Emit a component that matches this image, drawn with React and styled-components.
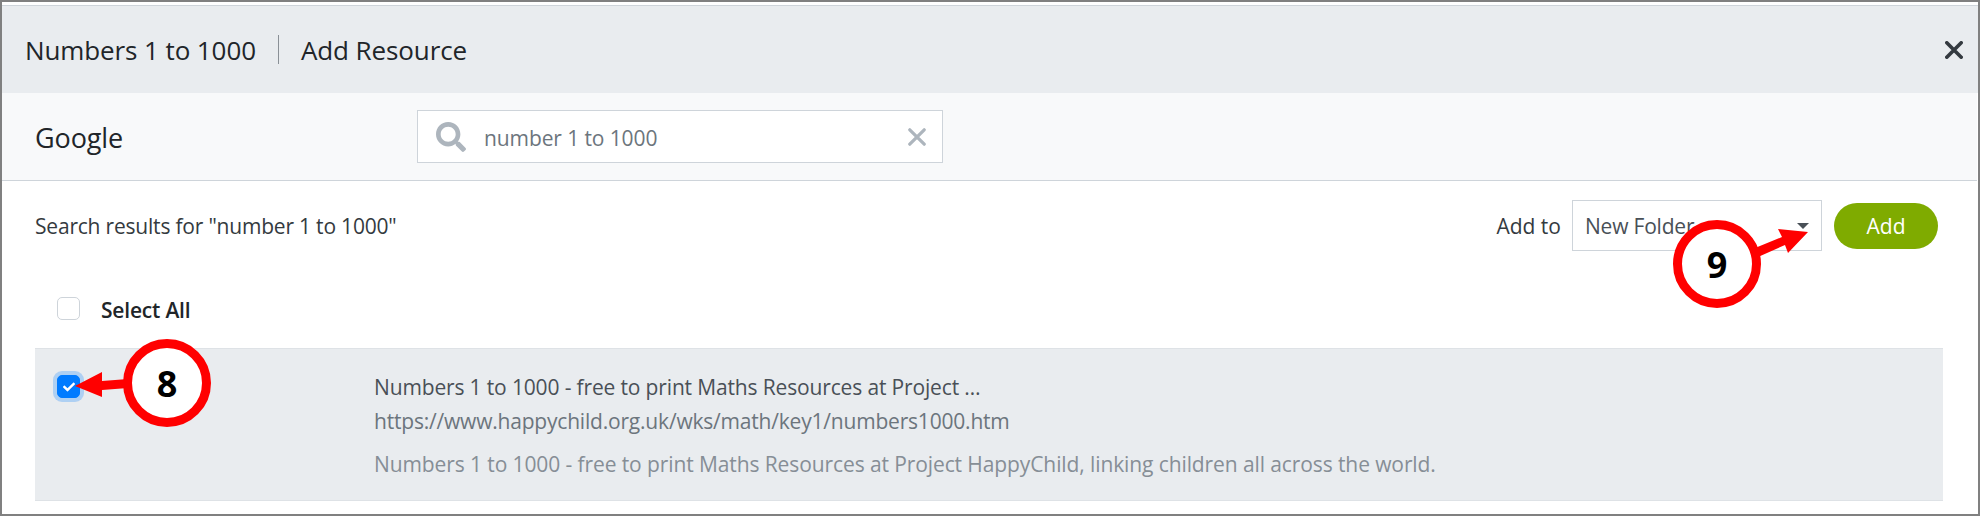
import React from 'react'
import styled, { createGlobalStyle } from 'styled-components'
import { FaSearch, FaCheck } from 'react-icons/fa'

const GlobalStyle = createGlobalStyle`
  html, body { margin: 0; padding: 0; background: #fff; }
  * { box-sizing: border-box; }
  body { font-family: "Open Sans", "Noto Sans", sans-serif; color: #212529; }
`

const Frame = styled.div`
  position: relative;
  width: 1980px;
  height: 516px;
  overflow: hidden;
  background: #fff;
  border: 2px solid #808080;
  padding-top: 3px;
`

const Header = styled.header`
  height: 88px;
  display: flex;
  align-items: center;
  background: #e9ecef;
  border-top: 1px solid #ced4da;
  padding: 0 15px 0 23px;
`

const Title = styled.h1`
  margin: 0;
  font-size: 26px;
  font-weight: 400;
  color: #212529;
  letter-spacing: -0.1px;
`

const Divider = styled.span`
  width: 1px;
  height: 29px;
  margin: 0 22px;
  background: #8a9096;
`

const CloseButton = styled.button`
  margin-left: auto;
  border: 0;
  padding: 0;
  background: none;
  display: flex;
  color: #343a40;
`

const SubHeader = styled.div`
  height: 88px;
  margin-right: 1px;
  display: grid;
  grid-template-columns: 382px 526px;
  align-items: center;
  padding-left: 33px;
  background: #f8f9fa;
  border-bottom: 1px solid #ced4da;
`

const SourceName = styled.span`
  margin-top: 2px;
  font-size: 27px;
  color: #212529;
  letter-spacing: -0.1px;
`

const SearchBox = styled.div`
  height: 53px;
  display: flex;
  align-items: center;
  background: #fff;
  border: 1px solid #ced4da;
  padding: 0 16px 0 18px;
  color: #adb5bd;
`

const SearchText = styled.span`
  margin: 3px 0 0 18px;
  font-size: 21px;
  color: #6c757d;
  letter-spacing: -0.1px;
`

const ClearIcon = styled.span`
  margin-left: auto;
  display: flex;
  color: #adb5bd;
`

const Content = styled.main`
  padding: 19px 33px 0;
`

const Toolbar = styled.div`
  display: flex;
  align-items: center;
  height: 51px;
  font-size: 21px;
  letter-spacing: -0.2px;
`

const ResultsLabel = styled.span`
  color: #343a40;
`

const AddToLabel = styled.span`
  margin-left: auto;
  margin-right: 11px;
  color: #343a40;
  letter-spacing: 0;
`

const FolderSelect = styled.div`
  width: 250px;
  height: 51px;
  display: flex;
  align-items: center;
  justify-content: space-between;
  padding: 0 12px;
  color: #495057;
  border: 1px solid #ced4da;
  background: #fff;
`

const Caret = styled.span`
  width: 0;
  height: 0;
  border-left: 6px solid transparent;
  border-right: 6px solid transparent;
  border-top: 6px solid #495057;
`

const AddButton = styled.button`
  width: 104px;
  height: 46px;
  margin-left: 12px;
  margin-right: 7px;
  border: 0;
  border-radius: 23px;
  background: #7fab00;
  color: #fff;
  font: inherit;
`

const SelectAllRow = styled.div`
  height: 97px;
  display: flex;
  align-items: flex-start;
  gap: 21px;
  padding: 46px 0 0 22px;
`

const Box = styled.span`
  flex: none;
  width: 23px;
  height: 23px;
  display: flex;
  align-items: center;
  justify-content: center;
  border-radius: 5px;
  font-size: 12px;
  color: #fff;
  background: ${(p) => (p.$checked ? '#007bff' : '#fff')};
  border: 1px solid ${(p) => (p.$checked ? '#007bff' : '#ced4da')};
  box-shadow: ${(p) => (p.$checked ? '0 0 0 4px rgba(0, 123, 255, 0.25)' : 'none')};
`

const SelectAllLabel = styled.span`
  font-size: 21px;
  line-height: 26px;
  font-weight: 600;
  color: #212529;
  letter-spacing: -0.2px;
`

const ResultRow = styled.div`
  height: 153px;
  width: 1908px;
  display: grid;
  grid-template-columns: 339px 1fr;
  padding-top: 21px;
  background: #e9ecef;
  border-top: 1px solid #dee2e6;
  border-bottom: 1px solid #dee2e6;
`

const RowCheck = styled.div`
  padding: 5px 0 0 22px;
`

const RowText = styled.div`
  display: flex;
  flex-direction: column;
  font-size: 21px;
`

const ResultTitle = styled.span`
  line-height: 34px;
  color: #495057;
  letter-spacing: -0.15px;
`

const ResultUrl = styled.span`
  line-height: 34px;
  color: #6c757d;
  letter-spacing: -0.2px;
`

const ResultDesc = styled.span`
  margin-top: 9px;
  line-height: 34px;
  color: #868e96;
  letter-spacing: -0.1px;
`

const Callout = styled.div`
  position: absolute;
  left: ${(p) => p.$x}px;
  top: ${(p) => p.$y}px;
  width: 88px;
  height: 88px;
  display: flex;
  align-items: center;
  justify-content: center;
  border-radius: 50%;
  border: 9px solid #ff0000;
  background: #fff;
  color: #000;
  font-size: 36px;
  font-weight: 700;
`

const ArrowLayer = styled.svg`
  position: absolute;
  left: -2px;
  top: -2px;
  pointer-events: none;
`

// cross used by the close and clear buttons
function Cross({ size, weight }) {
  return (
    <svg width={size} height={size} viewBox="0 0 20 20">
      <path d="M2 2 L18 18 M18 2 L2 18" stroke="currentColor" strokeWidth={weight} strokeLinecap="round" />
    </svg>
  )
}

export default function App() {
  return (
    <Frame>
      <GlobalStyle />
      <Header>
        <Title>Numbers 1 to 1000</Title>
        <Divider />
        <Title>Add Resource</Title>
        <CloseButton><Cross size={18} weight={4} /></CloseButton>
      </Header>
      <SubHeader>
        <SourceName>Google</SourceName>
        <SearchBox>
          <FaSearch size={30} />
          <SearchText>number 1 to 1000</SearchText>
          <ClearIcon><Cross size={18} weight={3.6} /></ClearIcon>
        </SearchBox>
      </SubHeader>
      <Content>
        <Toolbar>
          <ResultsLabel>Search results for "number 1 to 1000"</ResultsLabel>
          <AddToLabel>Add to</AddToLabel>
          <FolderSelect>New Folder<Caret /></FolderSelect>
          <AddButton>Add</AddButton>
        </Toolbar>
        <SelectAllRow>
          <Box />
          <SelectAllLabel>Select All</SelectAllLabel>
        </SelectAllRow>
        <ResultRow>
          <RowCheck><Box $checked><FaCheck /></Box></RowCheck>
          <RowText>
            <ResultTitle>Numbers 1 to 1000 - free to print Maths Resources at Project …</ResultTitle>
            <ResultUrl>https://www.happychild.org.uk/wks/math/key1/numbers1000.htm</ResultUrl>
            <ResultDesc>Numbers 1 to 1000 - free to print Maths Resources at Project HappyChild, linking children all across the world.</ResultDesc>
          </RowText>
        </ResultRow>
      </Content>
      <ArrowLayer width="1980" height="516" viewBox="0 0 1980 516">
        <path d="M128 379 L102 381 L102 372 L75 386 L102 397 L102 390 L128 388 Z" fill="#ff0000" />
        <path d="M1755 248 L1782 237 L1778 229 L1808 232 L1788 253 L1785 245 L1758 257 Z" fill="#ff0000" />
      </ArrowLayer>
      <Callout $x={121} $y={337}>8</Callout>
      <Callout $x={1671} $y={218}>9</Callout>
    </Frame>
  )
}
